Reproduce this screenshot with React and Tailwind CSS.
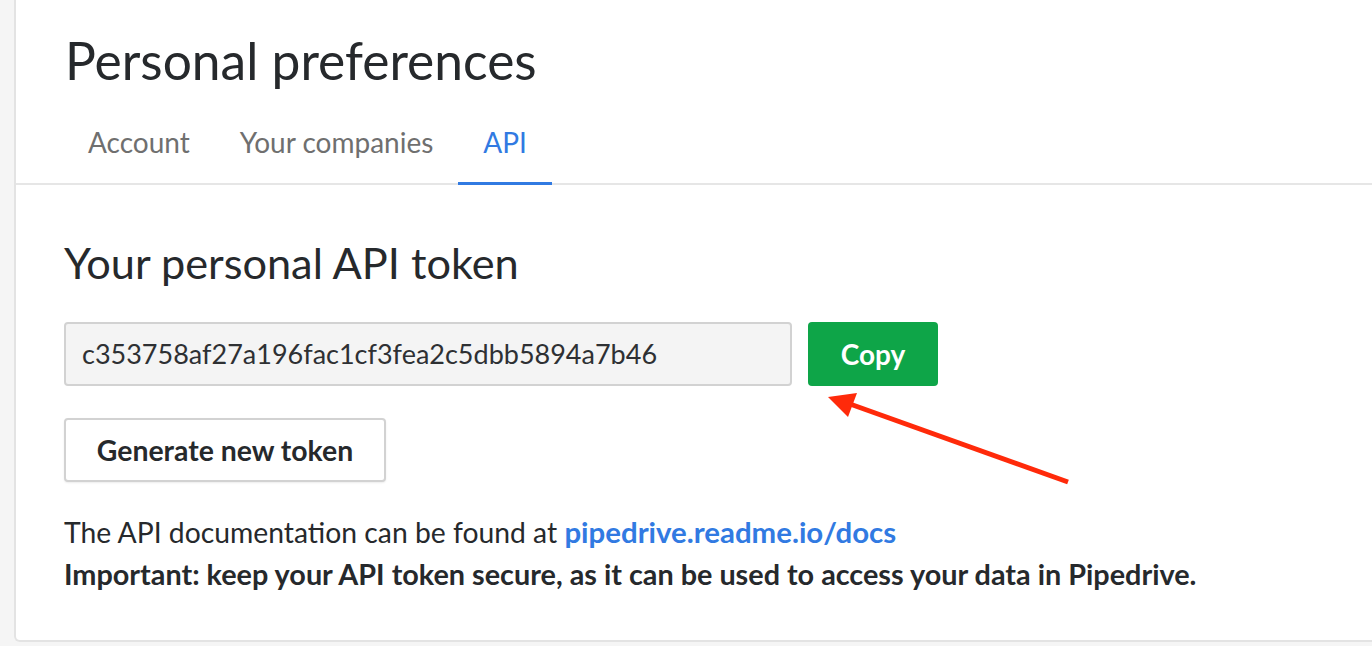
import React from 'react';

const font = { fontFamily: '"Lato", "Open Sans", sans-serif' };

const Tab = ({ label, active }) => (
    <div
        className={
            'px-[25px] pb-[26px] border-b-[3px] text-[28px] leading-none ' +
            (active ? 'border-[#317ae2] text-[#317ae2]' : 'border-transparent text-[#6f6f6f]')
        }
    >
        {label}
    </div>
);

const Arrow = () => (
    <svg className="absolute left-[804px] top-[385px]" width="260" height="104" viewBox="0 0 260 104">
        <line x1="248" y1="97" x2="30" y2="19" stroke="#ff2a0a" strokeWidth="5" />
        <polygon points="8,12 37,8 28,32" fill="#ff2a0a" />
    </svg>
);

export default function App() {
    return (
        <div className="w-[1372px] h-[646px] bg-[#f5f5f5] overflow-hidden pl-[14px]" style={font}>
            <div className="relative h-[642px] bg-white border-l-2 border-b-2 border-[#e3e3e3] rounded-bl-[6px]">
                <header className="border-b-2 border-[#e6e6e6]">
                    <h1 className="pl-[49px] pt-[30px] text-[51.5px] leading-[60px] text-[#26292c]">Personal preferences</h1>
                    <nav className="flex pl-[47px] pt-[38px] -mb-[2px]">
                        <Tab label="Account" />
                        <Tab label="Your companies" />
                        <Tab label="API" active />
                    </nav>
                </header>

                <section className="pl-[48px] pt-[52px]">
                    <h2 className="text-[43.3px] leading-[50px] text-[#26292c]">Your personal API token</h2>

                    <div className="flex gap-[16px] mt-[35px]">
                        <div className="w-[728px] h-[64px] flex items-center px-[16px] bg-[#f4f4f4] border-2 border-[#d2d2d2] rounded-[4px] text-[27px] text-[#2e3033]">
                            c353758af27a196fac1cf3fea2c5dbb5894a7b46
                        </div>
                        <button className="w-[130px] h-[64px] bg-[#0ea548] rounded-[4px] text-white text-[28px] font-bold">
                            Copy
                        </button>
                    </div>

                    <button className="mt-[32px] w-[322px] h-[64px] bg-white border-2 border-[#d2d2d2] rounded-[4px] shadow-[0_1px_2px_rgba(0,0,0,0.08)] text-[28.4px] font-bold text-[#26292c]">
                        Generate new token
                    </button>

                    <div className="mt-[29px] text-[28.8px] leading-[42px] text-[#26292c]">
                        <p className="text-[28.3px]">
                            The API documentation can be found at{' '}
                            <a className="text-[#317ae2] font-bold text-[29.4px]">pipedrive.readme.io/docs</a>
                        </p>
                        <p className="font-bold">
                            Important: keep your API token secure, as it can be used to access your data in Pipedrive.
                        </p>
                    </div>
                </section>

                <Arrow />
            </div>
        </div>
    );
}
